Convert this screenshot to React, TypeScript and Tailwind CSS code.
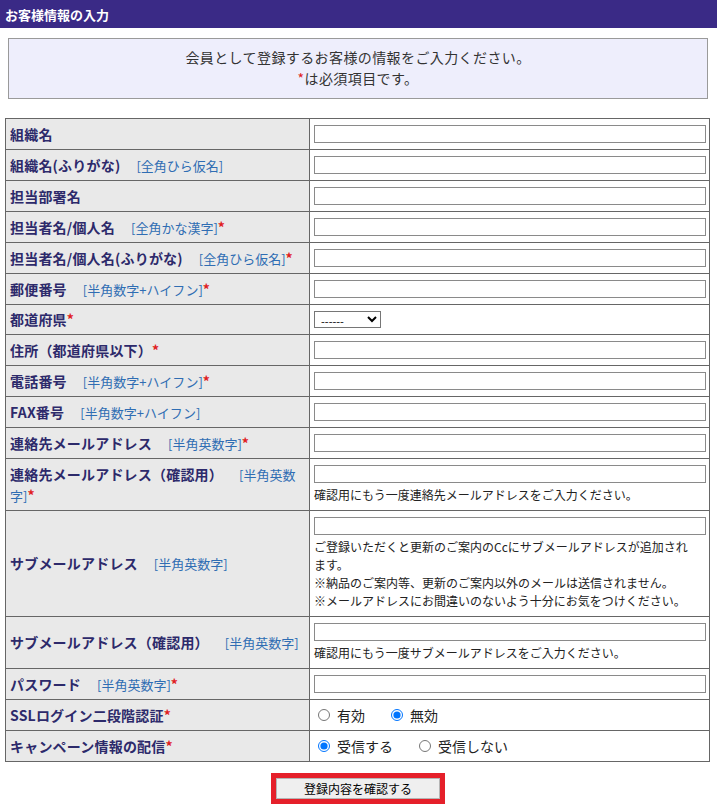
import React from 'react';

type Opt = { label: string; checked?: boolean };

type Row = {
  label: string;
  hint?: string;
  req?: boolean;
  kind?: 'text' | 'select' | 'radio';
  notes?: string[];
  name?: string;
  options?: Opt[];
};

const rows: Row[] = [
  { label: '組織名' },
  { label: '組織名(ふりがな)', hint: '[全角ひら仮名]' },
  { label: '担当部署名' },
  { label: '担当者名/個人名', hint: '[全角かな漢字]', req: true },
  { label: '担当者名/個人名(ふりがな)', hint: '[全角ひら仮名]', req: true },
  { label: '郵便番号', hint: '[半角数字+ハイフン]', req: true },
  { label: '都道府県', req: true, kind: 'select' },
  { label: '住所（都道府県以下）', req: true },
  { label: '電話番号', hint: '[半角数字+ハイフン]', req: true },
  { label: 'FAX番号', hint: '[半角数字+ハイフン]' },
  { label: '連絡先メールアドレス', hint: '[半角英数字]', req: true },
  {
    label: '連絡先メールアドレス（確認用）',
    hint: '[半角英数字]',
    req: true,
    notes: ['確認用にもう一度連絡先メールアドレスをご入力ください。'],
  },
  {
    label: 'サブメールアドレス',
    hint: '[半角英数字]',
    notes: [
      'ご登録いただくと更新のご案内のCcにサブメールアドレスが追加されます。',
      '※納品のご案内等、更新のご案内以外のメールは送信されません。',
      '※メールアドレスにお間違いのないよう十分にお気をつけください。',
    ],
  },
  {
    label: 'サブメールアドレス（確認用）',
    hint: '[半角英数字]',
    notes: ['確認用にもう一度サブメールアドレスをご入力ください。'],
  },
  { label: 'パスワード', hint: '[半角英数字]', req: true },
  {
    label: 'SSLログイン二段階認証',
    req: true,
    kind: 'radio',
    name: 'ssl',
    options: [{ label: '有効' }, { label: '無効', checked: true }],
  },
  {
    label: 'キャンペーン情報の配信',
    req: true,
    kind: 'radio',
    name: 'campaign',
    options: [{ label: '受信する', checked: true }, { label: '受信しない' }],
  },
];

function Field({ row }: { row: Row }) {
  if (row.kind === 'select') {
    return (
      <select
        defaultValue=""
        className="block w-[67px] h-[17px] border border-[#767676] bg-white text-[11px] leading-none text-black px-[2px]"
      >
        <option value="">------</option>
      </select>
    );
  }
  if (row.kind === 'radio') {
    return (
      <div className="flex items-center h-[18px] pl-[4px] gap-[26px] text-[14px] text-[#222]">
        {row.options!.map((o) => (
          <label key={o.label} className="flex items-center gap-[7px]">
            <input
              type="radio"
              name={row.name}
              defaultChecked={o.checked}
              className="w-[12px] h-[12px] m-0 accent-[#0075ff]"
            />
            <span>{o.label}</span>
          </label>
        ))}
      </div>
    );
  }
  return (
    <div>
      <input
        type="text"
        className="block w-full h-[18px] border border-[#8a8a8a] bg-white"
      />
      {row.notes && (
        <div className="mt-[3px] pr-[12px] text-[12px] leading-[18px] text-[#222]">
          {row.notes.map((n) => (
            <div key={n}>{n}</div>
          ))}
        </div>
      )}
    </div>
  );
}

export default function App() {
  return (
    <div className="w-[717px] min-h-[804px] bg-white font-['Noto_Sans_CJK_JP',sans-serif]">
      <div className="h-[28px] bg-[#3a2a86] px-[5px] flex items-center">
        <h1 className="text-white text-[13px] font-bold leading-none">お客様情報の入力</h1>
      </div>

      <div className="mx-[8px] mt-[10px] w-[700px] border border-[#9a9a9a] bg-[#eeeefc] pt-[8px] pb-[9px] text-center text-[14px] leading-[21px] tracking-[0.4px] text-[#333]">
        <p>会員として登録するお客様の情報をご入力ください。</p>
        <p>
          <span className="text-[#e0201e]">*</span>は必須項目です。
        </p>
      </div>

      <table className="ml-[5px] mt-[19px] w-[705px] table-fixed border-collapse border border-[#666]">
        <colgroup>
          <col className="w-[304px]" />
          <col />
        </colgroup>
        <tbody>
          {rows.map((r) => (
            <tr key={r.label}>
              <td className="border border-[#666] bg-[#e9e9e9] px-[4px] py-[4px] align-middle text-[14px] leading-[21px]">
                <span className="font-bold text-[#2d2a6b] tracking-[0.2px]">{r.label}</span>
                {r.hint && (
                  <span className="pl-[16px] text-[13px] text-[#2f6db3]">{r.hint}</span>
                )}
                {r.req && <span className="font-bold text-[#e0201e]">*</span>}
              </td>
              <td className="border border-[#666] pl-[4px] pr-[3px] py-[6px] align-middle">
                <Field row={r} />
              </td>
            </tr>
          ))}
        </tbody>
      </table>

      <div className="mt-[11px] flex justify-center">
        <div className="border-[5px] border-[#e5202a] ml-[-1px]">
          <button
            type="button"
            className="block w-[164px] h-[21px] bg-[#efefef] border border-[#b5b5b5] text-[12px] leading-none text-black"
          >
            登録内容を確認する
          </button>
        </div>
      </div>
    </div>
  );
}
